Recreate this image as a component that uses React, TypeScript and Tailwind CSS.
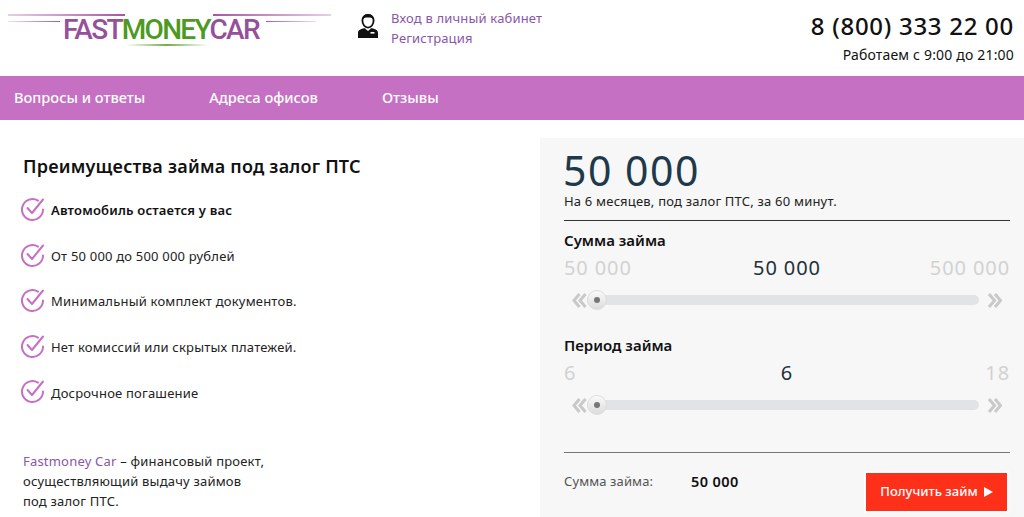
import React from "react";

const font = { fontFamily: '"Noto Sans", "Open Sans", sans-serif' };

function Check() {
  return (
    <svg width="24" height="26" viewBox="0 0 24 26" fill="none" className="shrink-0">
      <path d="M17 3.6 A10.5 10.5 0 1 0 22 12.5" stroke="#c670c4" strokeWidth="2" strokeLinecap="round" />
      <path d="M6.5 11 L11 16 L22 2.5" stroke="#c670c4" strokeWidth="2" strokeLinecap="round" strokeLinejoin="round" />
    </svg>
  );
}

function Chevrons({ dir }: { dir: "l" | "r" }) {
  const d = dir === "l"
    ? "M7.500 1 L2 7.500 L7.500 14 M13.500 1 L8 7.500 L13.500 14"
    : "M2 1 L7.500 7.500 L2 14 M8 1 L13.500 7.500 L8 14";
  return (
    <svg width="15" height="15" viewBox="0 0 15 15" fill="none" className="shrink-0">
      <path d={d} stroke="#c9c9c9" strokeWidth="3" />
    </svg>
  );
}

function Slider({ label, min, value, max }: { label: string; min: string; value: string; max: string }) {
  return (
    <div className="h-[105px]">
      <div className="text-[15px] leading-[20px] font-semibold text-[#111] pt-[9px] h-[30px]">{label}</div>
      <div className="grid grid-cols-3 items-center mt-[2px] h-[26px] text-[20px] tracking-[0.9px]">
        <span className="text-[#d2d2d2]">{min}</span>
        <span className="text-center text-[#22303a]">{value}</span>
        <span className="text-right text-[#d2d2d2]">{max}</span>
      </div>
      <div className="flex items-center mt-[9px] h-[24px] pl-[8px] pr-[8px]">
        <Chevrons dir="l" />
        <div className="relative flex-1 h-[10px] mr-[8px] rounded-full bg-[#e2e3e6]">
          <div className="absolute left-[0px] top-[-5px] w-[20px] h-[20px] rounded-full bg-gradient-to-b from-[#fafafa] to-[#dcdcdc] border border-[#dddddd] flex items-center justify-center">
            <div className="w-[6px] h-[6px] rounded-full bg-[#777]" />
          </div>
        </div>
        <Chevrons dir="r" />
      </div>
    </div>
  );
}

const items = [
  { t: "Автомобиль остается у вас", b: true },
  { t: "От 50 000 до 500 000 рублей" },
  { t: "Минимальный комплект документов." },
  { t: "Нет комиссий или скрытых платежей." },
  { t: "Досрочное погашение" },
];

export default function App() {
  return (
    <div className="w-[1024px] h-[517px] overflow-hidden bg-white" style={font}>
      <header className="h-[76px] flex">
        <div className="w-[340px] relative shrink-0">
          <div className="absolute left-[8px] top-[14px] w-[117px] h-[2px] bg-gradient-to-r from-[#e6cfe6] to-[#a855a5]" />
          <div className="absolute left-[213px] top-[14px] w-[118px] h-[2px] bg-gradient-to-r from-[#a855a5] to-[#e6cfe6]" />
          <div className="absolute left-[8px] top-[21px] w-[52px] h-[1px] bg-gradient-to-r from-[#f0e0f0] to-[#a855a5]" />
          <div className="absolute left-[266px] top-[21px] w-[50px] h-[1px] bg-gradient-to-r from-[#a855a5] to-[#f0e0f0]" />
          <div className="absolute left-[63px] top-[13px] text-[28px] leading-[34px] font-medium tracking-[-1.7px] whitespace-nowrap" style={{ fontFamily: '"Roboto", sans-serif' }}>
            <span className="text-[#96509a]">FAST</span>
            <span className="text-[#4d9a22]">MONEY</span>
            <span className="text-[#96509a]">CAR</span>
          </div>
          <div className="absolute left-[126px] top-[44px] w-[82px] h-[2px] bg-gradient-to-r from-white via-[#6fae4a] to-white" />
        </div>
        <div className="flex pl-[17px] pt-[8px] flex-1">
          <svg width="22" height="28" viewBox="0 0 22 28" className="mt-[5px] shrink-0">
            <path d="M11 2c-3.600 0-5.600 2.300-5.600 5.600 0 3.800 2.400 7 5.600 7s5.600-3.200 5.600-7C16.600 4.300 14.600 2 11 2z" fill="#fff" stroke="#111" strokeWidth="1.800" />
            <path d="M5.200 7.600C6 5 8 4.600 11 4.600s5 .4 5.800 3c.6-3.400-1.800-6.600-5.800-6.600S4.600 4.200 5.200 7.600z" fill="#111" />
            <path d="M1 25v-5c0-3 3-4 6.500-5l3.500 3 3.500-3c3.500 1 6.500 2 6.500 5v5z" fill="#111" />
            <rect x="13.500" y="19" width="4" height="1.600" fill="#fff" />
          </svg>
          <div className="ml-[12px] text-[13px] leading-[20px] tracking-[0.17px] text-[#8b55a8]">
            <div className="h-[20px]">Вход в личный кабинет</div>
            <div className="h-[20px]">Регистрация</div>
          </div>
        </div>
        <div className="w-[300px] pr-[10px] text-right text-[#111] pt-[10px]">
          <div className="text-[24px] leading-[32px] font-medium tracking-[0.72px]">8 (800) 333 22 00</div>
          <div className="text-[14px] leading-[20px] tracking-[0.18px] mt-[3px]">Работаем с 9:00 до 21:00</div>
        </div>
      </header>
      <nav className="h-[44px] bg-[#c670c4] flex items-center pl-[14px] gap-[64px] text-[14.6px] font-medium text-white">
        <span>Вопросы и ответы</span>
        <span>Адреса офисов</span>
        <span>Отзывы</span>
      </nav>
      <main className="flex pt-[18px] h-[397px]">
        <section className="w-[540px] shrink-0 pl-[21px]">
          <h1 className="pl-[2px] pt-[16px] text-[18px] leading-[24px] font-semibold tracking-[0.22px] text-[#111]">Преимущества займа под залог ПТС</h1>
          <ul className="mt-[19px] flex flex-col gap-[19.6px]">
            {items.map((i) => (
              <li key={i.t} className="flex items-center h-[26px] text-[13px] tracking-[0.2px] text-[#222]">
                <Check />
                <span className={`ml-[6px] pt-[2px] ${i.b ? "font-semibold text-[#111]" : ""}`}>{i.t}</span>
              </li>
            ))}
          </ul>
          <p className="pl-[2px] mt-[46px] text-[13px] tracking-[0.2px] leading-[20px] text-[#222]">
            <span className="text-[#8b55a8]">Fastmoney Car</span> – финансовый проект,<br />
            осуществляющий выдачу займов<br />
            под залог ПТС.
          </p>
        </section>
        <section className="flex-1 bg-[#f7f7f7] pl-[24px] pr-[14px]">
          <div className="text-[41px] leading-[36px] tracking-[1.5px] text-[#20394a] pt-[14px] h-[54px] -ml-[1px]">50 000</div>
          <div className="text-[13px] tracking-[0.2px] leading-[18px] text-[#222]">На 6 месяцев, под залог ПТС, за 60 минут.</div>
          <div className="h-[1px] bg-[#333] mt-[10px]" />
          <Slider label="Сумма займа" min="50 000" value="50 000" max="500 000" />
          <Slider label="Период займа" min="6" value="6" max="18" />
          <div className="h-[1px] bg-[#777] mt-[21px]" />
          <div className="flex items-start pt-[20px]">
            <span className="w-[127px] -mt-[1px] text-[13px] tracking-[0.1px] leading-[18px] text-[#555]">Сумма займа:</span>
            <span className="-mt-[1px] text-[14.5px] tracking-[0.4px] leading-[18px] font-semibold text-[#111]">50 000</span>
            <button className="ml-auto mr-[3px] w-[141px] h-[38px] bg-[#ff3019] text-white text-[13px] font-medium flex items-center justify-center gap-[6px] outline outline-2 outline-white">
              Получить займ
              <span className="w-0 h-0 border-y-[5px] border-y-transparent border-l-[9px] border-l-white" />
            </button>
          </div>
        </section>
      </main>
    </div>
  );
}
